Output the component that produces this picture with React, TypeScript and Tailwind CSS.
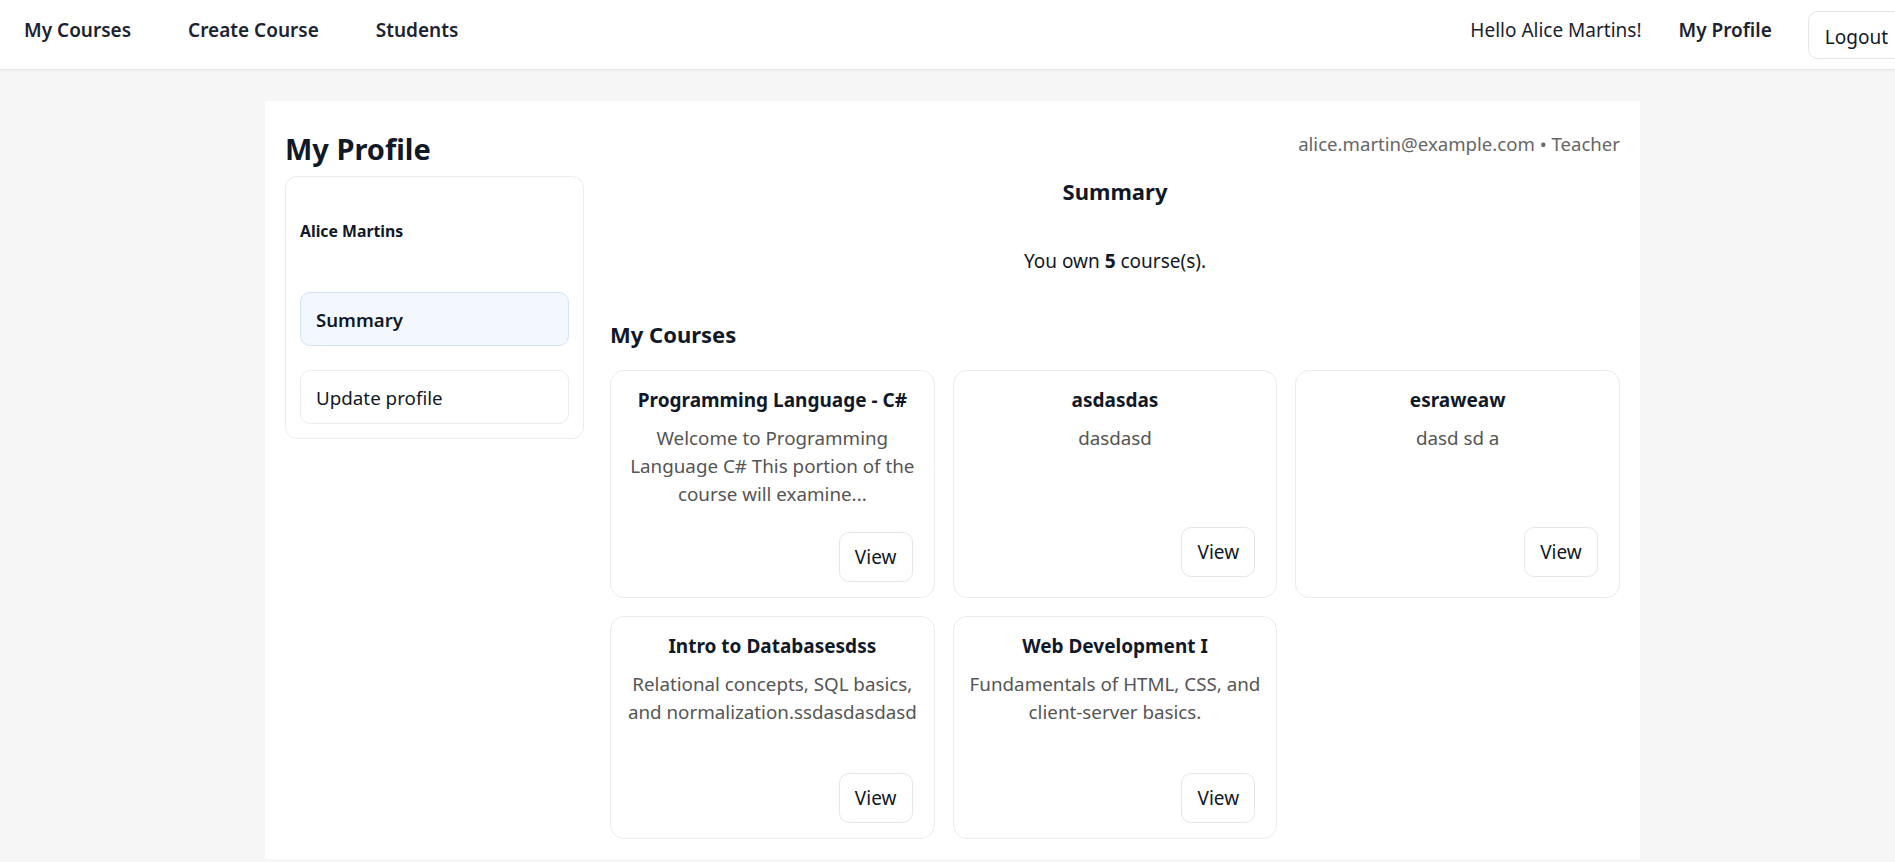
import React from "react";

const courses = [
  {
    title: "Programming Language - C#",
    desc: "Welcome to Programming Language C# This portion of the course will examine...",
  },
  { title: "asdasdas", desc: "dasdasd" },
  { title: "esraweaw", desc: "dasd sd a" },
  {
    title: "Intro to Databasesdss",
    desc: "Relational concepts, SQL basics, and normalization.ssdasdasdasd",
  },
  {
    title: "Web Development I",
    desc: "Fundamentals of HTML, CSS, and client-server basics.",
  },
];

function CourseCard({ title, desc }: { title: string; desc: string }) {
  return (
    <div className="flex flex-col rounded-[14px] border border-[#ebebeb] bg-white px-[13px] pt-[15px] pb-[15px] text-center">
      <div className="text-[19px] font-bold leading-[28px] text-[#111827]">{title}</div>
      <div className="mt-[10px] min-h-[79px] text-[18.8px] leading-[28px] text-[#555555]">{desc}</div>
      <div className="mt-[24px] flex justify-end pr-[8px]">
        <button className="h-[50px] w-[74px] rounded-[10px] border border-[#e6e6e6] bg-white text-[19px] text-[#111827]">
          View
        </button>
      </div>
    </div>
  );
}

export default function App() {
  return (
    <div
      className="min-h-screen w-full overflow-hidden bg-[#f6f6f6]"
      style={{ fontFamily: '"Noto Sans", "Open Sans", sans-serif' }}
    >
      <div className="w-[1905px]">
        <nav className="flex h-[70px] items-start justify-between border-b border-[#e8e8e8] bg-white pl-[24px] shadow-[0_1px_3px_rgba(0,0,0,0.04)]">
          <div className="flex gap-[57px] pt-[16px] text-[19px] font-semibold leading-[28px] text-[#1b2230]">
            <span>My Courses</span>
            <span>Create Course</span>
            <span>Students</span>
          </div>
          <div className="flex items-start text-[19px] leading-[28px] text-[#1b2230]">
            <span className="pt-[16px]">Hello Alice Martins!</span>
            <span className="ml-[37px] pt-[16px] font-semibold">My Profile</span>
            <button className="ml-[36px] mt-[11px] h-[48px] rounded-[10px] border border-[#e6e6e6] bg-white px-[16px] pt-[3px] text-[19px] text-[#111827]">
              Logout
            </button>
          </div>
        </nav>
        <main className="pt-[31px]">
          <div className="mx-auto w-[1375px] bg-white p-[20px]">
            <div className="flex items-start justify-between">
              <h1 className="mt-[10px] text-[29px] font-bold leading-[36px] text-[#111827]">My Profile</h1>
              <span className="mt-[9px] text-[18.6px] leading-[28px] text-[#666666]">
                alice.martin@example.com • Teacher
              </span>
            </div>
            <div className="mt-[9px] grid grid-cols-[299px_1fr] gap-[26px]">
              <aside className="self-start rounded-[12px] border border-[#ececec] p-[14px]">
                <div className="mt-[30px] text-[15.8px] font-bold leading-[20px] text-[#111827]">Alice Martins</div>
                <div className="mt-[51px] flex flex-col gap-[24px]">
                  <div className="flex h-[54px] items-center rounded-[10px] border border-[#d3e3f8] bg-[#f3f8fe] px-[15px] pt-[2px] text-[18.6px] font-semibold text-[#111827]">
                    Summary
                  </div>
                  <div className="flex h-[54px] items-center rounded-[10px] border border-[#ececec] bg-white px-[15px] pt-[2px] text-[18.8px] text-[#111827]">
                    Update profile
                  </div>
                </div>
              </aside>
              <section>
                <h2 className="mt-[0px] text-center text-[22px] font-bold leading-[30px] text-[#111827]">Summary</h2>
                <p className="mt-[41px] text-center text-[19px] leading-[28px] text-[#111827]">
                  You own <b>5</b> course(s).
                </p>
                <h2 className="mt-[43px] text-[22px] font-bold leading-[32px] text-[#111827]">My Courses</h2>
                <div className="mt-[20px] grid grid-cols-3 gap-[18px]">
                  {courses.map((c) => (
                    <CourseCard key={c.title} title={c.title} desc={c.desc} />
                  ))}
                </div>
              </section>
            </div>
          </div>
        </main>
      </div>
    </div>
  );
}
